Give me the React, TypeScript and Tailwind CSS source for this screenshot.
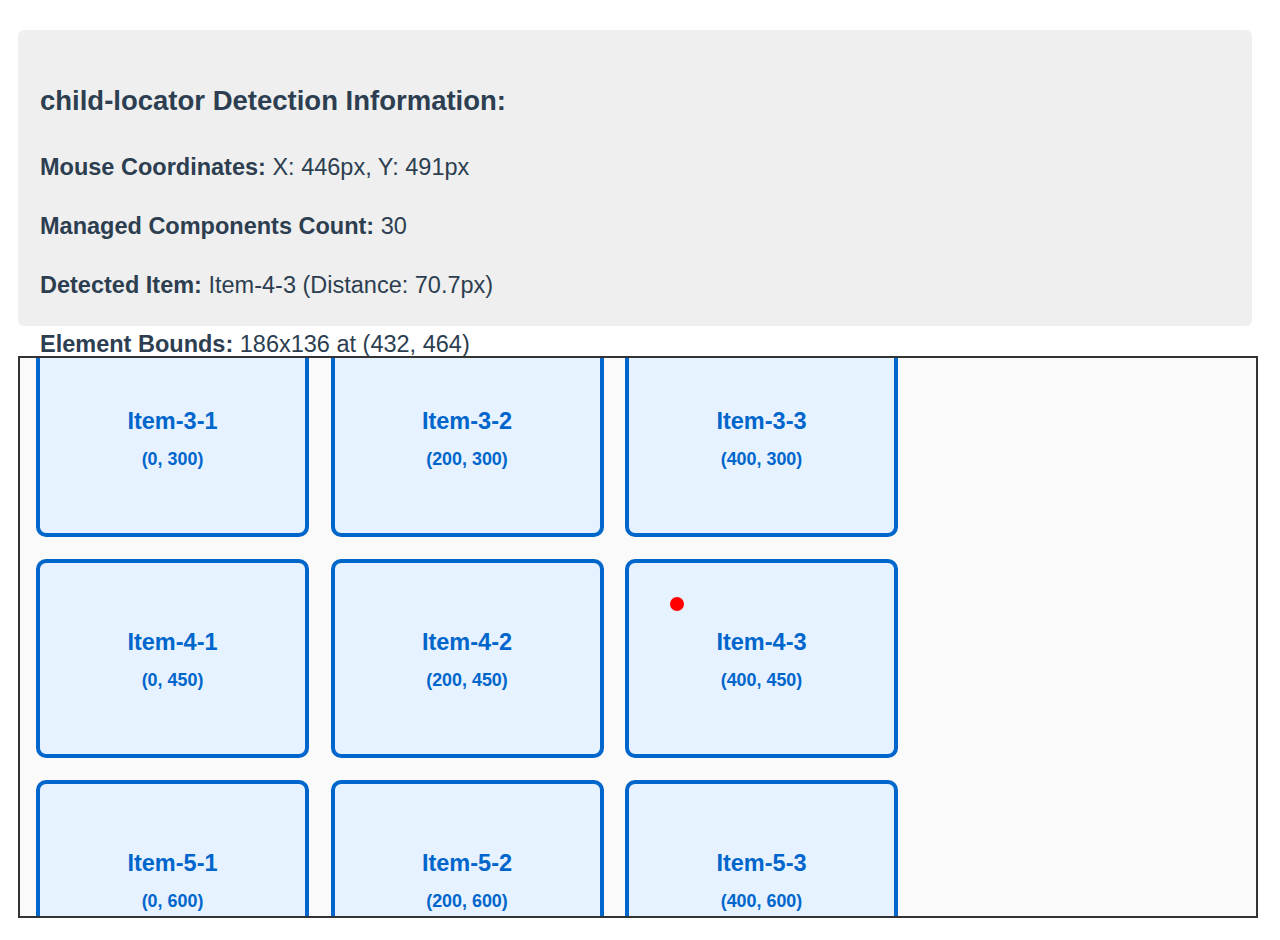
import { useEffect, useRef } from 'react';

const rows = Array.from({ length: 10 }, (_, r) => r + 1);
const cols = [1, 2, 3];

function InfoLine({ label, value }: { label: string; value: string }) {
  return (
    <p className="text-[23.5px] leading-[36px] mb-[23px] whitespace-nowrap">
      <strong className="font-bold">{label}</strong> {value}
    </p>
  );
}

export default function App() {
  const scrollRef = useRef<HTMLDivElement>(null);

  useEffect(() => {
    if (scrollRef.current) scrollRef.current.scrollTop = 478;
  }, []);

  return (
    <div className="min-h-[940px] bg-white pt-[30px] pl-[18px] text-[#2c3e50]" style={{ fontFamily: '"Liberation Sans", Arial, sans-serif' }}>
      <div className="w-[1234px] h-[296px] rounded-md bg-[#efefef] pt-[55px] pl-[22px]">
        <h3 className="text-[27.5px] leading-[31px] font-bold mb-[33px]">child-locator Detection Information:</h3>
        <InfoLine label="Mouse Coordinates:" value="X: 446px, Y: 491px" />
        <InfoLine label="Managed Components Count:" value="30" />
        <InfoLine label="Detected Item:" value="Item-4-3 (Distance: 70.7px)" />
        <InfoLine label="Element Bounds:" value="186x136 at (432, 464)" />
      </div>

      <div className="relative mt-[30px] w-[1240px]">
        <div ref={scrollRef} className="h-[562px] overflow-hidden border-2 border-[#333] bg-[#fafafa]">
          <div className="grid grid-cols-[repeat(3,273px)] gap-x-[21.5px] gap-y-[22px] p-[16px]">
            {rows.map((r) =>
              cols.map((c) => (
                <div
                  key={`${r}-${c}`}
                  className="h-[199px] rounded-[10px] border-4 border-[#0066cc] bg-[#e6f2ff] flex flex-col items-center justify-center text-[#0066cc] font-bold"
                >
                  <div className="text-[23.5px] leading-[28px]">Item-{r}-{c}</div>
                  <div className="text-[17.9px] leading-[20px] mt-[14px]">
                    ({(c - 1) * 200}, {(r - 1) * 150})
                  </div>
                </div>
              ))
            )}
          </div>
        </div>
        <div className="absolute left-[652px] top-[241px] w-[14px] h-[14px] rounded-full bg-[#ff0000]" />
      </div>
    </div>
  );
}
